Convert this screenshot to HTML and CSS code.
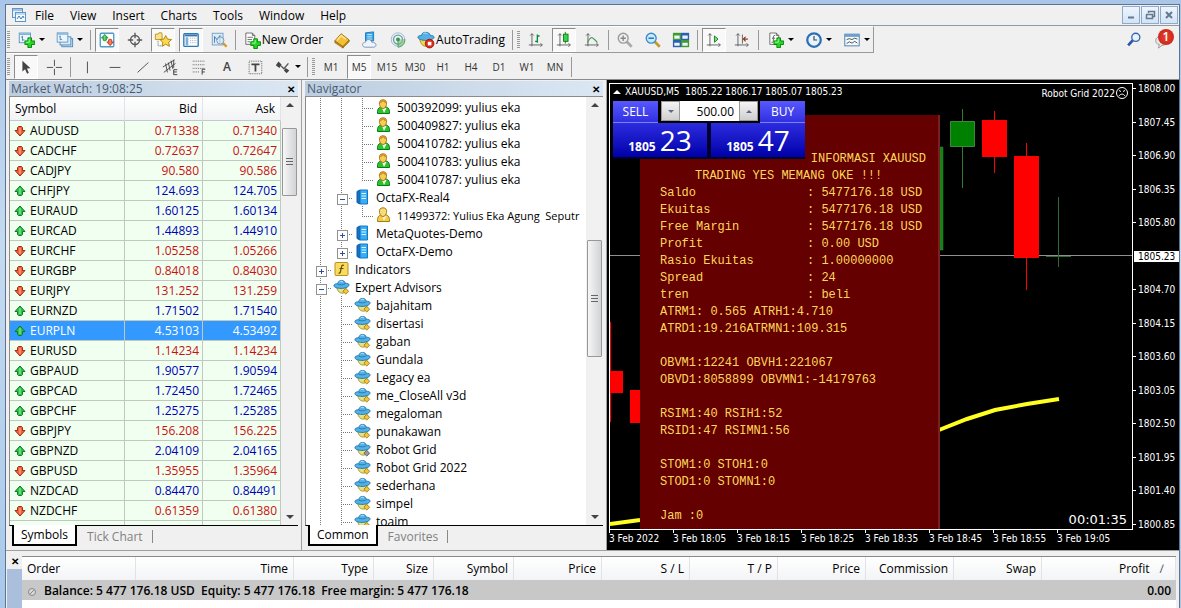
FILE: index.html
```html
<!DOCTYPE html>
<html lang="en">
<head>
    <meta charset="UTF-8">
    <meta name="viewport" content="width=device-width, initial-scale=1.0">
    <title>XAUUSD,M5</title>
    <link rel="stylesheet" href="styles.css">
</head>
<body>
    <!-- Icon set -->
    <svg class="defs" aria-hidden="true">
        <symbol id="up" viewBox="0 0 12 12"><path d="M6 1 L11 6.500 H8.500 V9.500 L7.500 10.500 H4.500 L3.500 9.500 V6.500 H1 Z" fill="#2fc24a" stroke="#0c7a24"/><path d="M6 3v6" stroke="#9bf0a8"/></symbol>
        <symbol id="down" viewBox="0 0 12 12"><path d="M6 11 L11 5.500 H8.500 V2.500 L7.500 1.500 H4.500 L3.500 2.500 V5.500 H1 Z" fill="#f0603a" stroke="#a02a10"/><path d="M6 3v6" stroke="#ffb39a"/></symbol>
        <symbol id="plus" viewBox="0 0 12 12"><path d="M4 .5h4v3.500h3.500v4H8v3.500H4V8H.5V4H4z" fill="#22d822" stroke="#067a06"/><path d="M5.500 2v3.500H2" fill="none" stroke="#a4ffa4"/></symbol>
        <symbol id="user" viewBox="0 0 16 16"><path d="M2 14.500c-.5-5 2-7 6-7s6.500 2 6 7z" fill="#2fc22f" stroke="#0a7a14"/><path d="M6.500 9l2 5 2.500-5z" fill="#eaffea"/><path d="M7.500 .8c-3 0-4 2-3.500 4.700.5 2.500 2 4 3.500 4s3-1.500 3.500-4C11.500 2.800 10.500.8 7.500.8z" fill="#f4cf52" stroke="#b8741a"/><path d="M5 4c1-3 4-3 5 0" fill="none" stroke="#d08a2c" stroke-width="1.500"/></symbol>
        <symbol id="usery" viewBox="0 0 16 16"><path d="M2 14.500c-.5-5 2-7 6-7s6.500 2 6 7z" fill="#f1cd4a" stroke="#a87a10"/><path d="M6.500 9l2 5 2.500-5z" fill="#fff4c8"/><path d="M7.500 .8c-3 0-4 2-3.500 4.700.5 2.500 2 4 3.500 4s3-1.500 3.500-4C11.500 2.800 10.500.8 7.500.8z" fill="#f7dd7a" stroke="#a87a10"/></symbol>
        <symbol id="server" viewBox="0 0 16 16"><path d="M2.500 2.500l3-1.500v14l-3-1.500z" fill="#1b6fc0" stroke="#0d5aa8"/><path d="M5.500 1h7.500v14H5.500z" fill="#35aef2" stroke="#1277c8"/><path d="M7 4.500h4.500M7 7h4.500M7 9.500h4.500" stroke="#e2f6ff"/></symbol>
        <symbol id="func" viewBox="0 0 16 16"><rect x="1.500" y="1.500" width="13" height="13" rx="1" fill="#f6dc62" stroke="#b8901c"/><path d="M10.500 4.500c-1.500-1-2.200 0-2.500 1.500l-1 4.500c-.3 1.500-1 2-2 1.500M6 7.500h4" fill="none" stroke="#6d4a00" stroke-width="1.200"/></symbol>
        <symbol id="ufo" viewBox="0 0 18 16"><path d="M4 8c.5 4.500 3 6.500 6 6.500s3.500-3.500 4-6.500z" fill="#e9e27a" stroke="#9d8f2a"/><path d="M1 6.500c0-1.500 2-2 4-2C5.500 2 7 1 9 1s3.500 1 4 3c2 0 4 .5 4 1.800 0 2-4 3.700-8.500 3.700S1 8.300 1 6.500z" fill="#55b0e4" stroke="#1d78b4"/><path d="M5 5c2 1 6 1 8-.5" fill="none" stroke="#1d78b4"/><path d="M7 2.500c1-.7 2.500-.7 3.500 0" stroke="#c9ecff" fill="none"/></symbol>
        <symbol id="ea" viewBox="0 0 18 16"><use href="#ufo" width="18" height="16"/><path d="M13.500 9.500l3 3-3 3-3-3z" fill="#f3c83c" stroke="#a87a10"/></symbol>
        <symbol id="eagray" viewBox="0 0 18 16"><use href="#ufo" width="18" height="16"/><path d="M13.500 9.500l3 3-3 3-3-3z" fill="#9a9a9a" stroke="#5c5c5c"/></symbol>
        <symbol id="axes" viewBox="0 0 20 20"><path d="M5.500 3v14M2 15.500h15M3.500 5l2-2 2 2M15 13.500l2 2-2 2" fill="none" stroke="#5a5a5a"/></symbol>
        <symbol id="chartwin" viewBox="0 0 20 20"><rect x="1.500" y="2.500" width="14" height="12" fill="#eaf5fd" stroke="#4a88b8"/><path d="M2 4h13" stroke="#7db4dc" stroke-width="2"/><path d="M5.500 6v6M4 7.500h1.500M5.500 11H8" stroke="#3d76a6" fill="none"/></symbol>
        <symbol id="page" viewBox="0 0 20 20"><path d="M3.500 2.500h8l3 3v11h-11z" fill="#fff" stroke="#555"/><path d="M11.500 2.500v3h3" fill="none" stroke="#555"/></symbol>
    </svg>

    <div class="window">
        <nav class="menubar">
            <svg class="app-icon" viewBox="0 0 16 16"><rect x="1.500" y="1.500" width="10" height="9" fill="#e6f2fb" stroke="#5f95c4"/><path d="M2 3h9" stroke="#5f95c4"/><rect x="4.500" y="5.500" width="10" height="9" fill="#f6fbff" stroke="#5f95c4"/><path d="M5 7h9" stroke="#8fbbe0"/><path d="M6 12l2-3 2 3 2-3 1 2" fill="none" stroke="#3f7fb8"/></svg>
            <a href="#">File</a>
            <a href="#">View</a>
            <a href="#">Insert</a>
            <a href="#">Charts</a>
            <a href="#">Tools</a>
            <a href="#">Window</a>
            <a href="#">Help</a>
            <div class="window-buttons">
                <button aria-label="Minimize"><svg viewBox="0 0 14 14"><path d="M4 9.500h6" stroke="#62798f" stroke-width="2"/></svg></button>
                <button aria-label="Restore"><svg viewBox="0 0 14 14"><path d="M5.500 5V3.500h6v5H10M5 3.500h6.500M3 6.500h6.500v4H3.500v-4" fill="none" stroke="#62798f" stroke-width="1.500"/></svg></button>
                <button aria-label="Close"><svg viewBox="0 0 14 14"><path d="M4 4l6 6M10 4l-6 6" stroke="#62798f" stroke-width="2"/></svg></button>
            </div>
        </nav>

        <div class="toolbar main-toolbar">
            <div class="tools">
                <span class="grip"></span>
                <button class="tool drop" aria-label="New chart"><svg viewBox="0 0 20 20"><use href="#chartwin" width="18" height="18"/><use href="#plus" x="7" y="7" width="12" height="12"/></svg></button>
                <button class="tool drop" aria-label="Profiles"><svg viewBox="0 0 20 20"><rect x="6.500" y="8.500" width="12" height="9" fill="#cfe5f6" stroke="#4a88b8"/><rect x="4.500" y="6.500" width="12" height="9" fill="#dcedf9" stroke="#4a88b8"/><use href="#chartwin" width="17" height="17"/></svg></button>
                <span class="sep"></span>
                <button class="tool pressed" aria-label="Market Watch"><svg viewBox="0 0 20 20"><rect x="2.500" y="2.500" width="15" height="15" rx="1" fill="#fff" stroke="#4e9ac8" stroke-width="1.500"/><use href="#up" x="3" y="3" width="9" height="9"/><use href="#down" x="9" y="8" width="9" height="9"/></svg></button>
                <button class="tool" aria-label="Data Window"><svg viewBox="0 0 20 20"><circle cx="10" cy="10" r="5" fill="none" stroke="#5a5a5a" stroke-width="1.500"/><path d="M10 2v6M10 12v6M2 10h6M12 10h6" stroke="#5a5a5a" stroke-width="1.500"/></svg></button>
                <button class="tool pressed" aria-label="Navigator"><svg viewBox="0 0 20 20"><path d="M1.500 3.500h3l1-1.500h3l.5 1.500v6H1.500z" fill="#f8e48a" stroke="#b8901c"/><path d="M4.500 11v5.500H9" fill="none" stroke="#555" stroke-dasharray="1 1"/><path d="M13 5l2 4 4.500.5-3.300 3 1 4.500-4.200-2.300L9 17l.8-4.500-3.300-3L11 9z" fill="#fbd94c" stroke="#b07c08"/></svg></button>
                <button class="tool pressed" aria-label="Terminal"><svg viewBox="0 0 20 20"><rect x="2" y="3" width="16" height="14" rx="1" fill="#fff" stroke="#2f77b4" stroke-width="1.500"/><path d="M3 5h14" stroke="#2f77b4" stroke-width="2"/><path d="M4 7h3v9H4z" fill="#79aedb"/><path d="M9 8h7M9 10.500h7M9 13h7" stroke="#aaa" stroke-dasharray="1 1"/></svg></button>
                <button class="tool" aria-label="Strategy Tester"><svg viewBox="0 0 20 20"><rect x="2.500" y="2.500" width="12" height="13" fill="#dcebf8" stroke="#6f9fc8"/><path d="M5 13V6l3 4 3-5v8" fill="none" stroke="#3f78ac"/><circle cx="11.500" cy="10.500" r="4" fill="#d8efff" fill-opacity=".6" stroke="#7894ac"/><path d="M14.500 13.500l4 4" stroke="#d29a2a" stroke-width="2.500"/></svg></button>
                <span class="sep"></span>
                <button class="tool wide"><svg viewBox="0 0 20 20"><use href="#page" width="18" height="18"/><path d="M5 7h6M5 9.500h5M5 12h3" stroke="#666"/><use href="#plus" x="8" y="8" width="12" height="12"/></svg>New Order</button>
                <button class="tool" aria-label="MetaEditor"><svg viewBox="0 0 20 20"><path d="M2 11l7-8 9 7-7 8z" fill="#f1bf38" stroke="#a06f08"/><path d="M2 11v2l9 6v-2zM11 19l7-7v-2l-7 7z" fill="#c48a14" stroke="#8c5f06" stroke-width=".6"/><path d="M4.500 10.500L9 5l5 4" fill="none" stroke="#ffe79a" stroke-width="1.500"/></svg></button>
                <button class="tool" aria-label="Virtual hosting"><svg viewBox="0 0 20 20"><path d="M5 2l9-1v10H5z" fill="#3aa7ea" stroke="#1a76bc"/><path d="M7 4h5M7 6.500h5M7 9h5" stroke="#d9f2ff"/><path d="M4.500 18c-4-.5-3.500-5.500.5-5.500 1-4 6-4 7 0 5-.5 6.500 5 2 5.500z" fill="#eef4fb" stroke="#7691b4"/></svg></button>
                <button class="tool" aria-label="Signals"><svg viewBox="0 0 20 20"><circle cx="10" cy="9.500" r="7.500" fill="none" stroke="#9bb4c8"/><circle cx="10" cy="9.500" r="5" fill="none" stroke="#5f9db4" stroke-width="1.500"/><path d="M10 9.500V18c5-.5 8-4 7.500-9" fill="#7cc47c" fill-opacity=".6" stroke="#4d9c58"/><circle cx="10" cy="9.500" r="2.200" fill="#3a9a4a"/></svg></button>
                <button class="tool wide auto"><svg viewBox="0 0 20 20"><path d="M3 9c1 6 4 8 7 8s5-4 6-8z" fill="#f4d648" stroke="#a88a14"/><path d="M1 7c0-1.500 2-2 4-2 .5-3 2.500-3.500 5-3.500S14.500 3 15 5c2 0 4 .5 4 2 0 2-4.500 3.500-9 3.500S1 9 1 7z" fill="#55b0e4" stroke="#1d78b4"/><path d="M7 3c1-1 3-1 4.500 0" fill="none" stroke="#c9ecff"/><circle cx="14" cy="14" r="4.800" fill="#e02a1a" stroke="#9c1408"/><rect x="12" y="12" width="4" height="4" fill="#fff"/></svg>AutoTrading</button>
                <span class="sep"></span>
                <span class="grip"></span>
                <button class="tool" aria-label="Bar chart"><svg viewBox="0 0 20 20"><use href="#axes" width="20" height="20"/><path d="M11.500 4v9M9 11.500h2.500M11.500 5.500H14" stroke="#0a8a3a" stroke-width="1.500"/></svg></button>
                <button class="tool pressed" aria-label="Candlesticks"><svg viewBox="0 0 20 20"><use href="#axes" width="20" height="20"/><path d="M11.500 1v13" stroke="#0a7a1a"/><rect x="9.500" y="3.500" width="5" height="8" fill="#35d64a" stroke="#0a7a1a"/></svg></button>
                <button class="tool" aria-label="Line chart"><svg viewBox="0 0 20 20"><use href="#axes" width="20" height="20"/><path d="M5 13c3-7 5-6 6-5s3 2 5 5" fill="none" stroke="#4a9a5a" stroke-width="1.300"/></svg></button>
                <span class="sep"></span>
                <button class="tool" aria-label="Zoom in"><svg viewBox="0 0 20 20"><path d="M12 12l5.500 5.500" stroke="#aaa" stroke-width="3"/><circle cx="8" cy="8" r="5.500" fill="#eee" stroke="#9a9a9a" stroke-width="1.500"/><path d="M5 8h6M8 5v6" stroke="#888" stroke-width="1.500"/></svg></button>
                <button class="tool" aria-label="Zoom out"><svg viewBox="0 0 20 20"><path d="M12 12l5.500 5.500" stroke="#c79a24" stroke-width="3"/><circle cx="8" cy="8" r="5.500" fill="#c4ecff" stroke="#3b8ac4" stroke-width="1.500"/><path d="M5 8h6" stroke="#1d62a4" stroke-width="1.500"/></svg></button>
                <button class="tool" aria-label="Tile windows"><svg viewBox="0 0 20 20"><path d="M1 2h9v8H1z" fill="#3f9a30"/><path d="M10 2h9v8h-9z" fill="#2d5fae"/><path d="M1 10h9v8H1z" fill="#2d5fae"/><path d="M10 10h9v8h-9z" fill="#3f9a30"/><path d="M2.500 5h6v3.500h-6zM11.500 5h6v3.500h-6zM2.500 13h6v3.500h-6zM11.500 13h6v3.500h-6z" fill="#e8f4ff"/></svg></button>
                <span class="sep"></span>
                <button class="tool pressed" aria-label="Auto scroll"><svg viewBox="0 0 20 20"><use href="#axes" width="20" height="20"/><path d="M10.500 5.500v7l4-3.500z" fill="#7be07b" stroke="#0a7a1a"/></svg></button>
                <button class="tool" aria-label="Chart shift"><svg viewBox="0 0 20 20"><use href="#axes" width="20" height="20"/><path d="M10.500 4v10" stroke="#5a5a5a"/><path d="M16.500 9H12M14 6.500L11.500 9l2.500 2.500" fill="none" stroke="#8a3a1a" stroke-width="1.300"/></svg></button>
                <span class="sep"></span>
                <button class="tool drop" aria-label="Indicators"><svg viewBox="0 0 20 20"><use href="#page" width="18" height="18"/><path d="M9 5c-2-.5-2 1-2 3v3c0 1.500-1 2-2 1.500M5.500 8H9" fill="none" stroke="#555"/><use href="#plus" x="7" y="7" width="12" height="12"/></svg></button>
                <button class="tool drop" aria-label="Periods"><svg viewBox="0 0 20 20"><circle cx="10" cy="10" r="7.500" fill="#e8f4fd" stroke="#2d6fb4" stroke-width="2.500"/><path d="M10 5.500V10h3.500" fill="none" stroke="#444" stroke-width="1.300"/></svg></button>
                <button class="tool drop" aria-label="Templates"><svg viewBox="0 0 20 20"><rect x="2" y="3.500" width="16" height="13" fill="#f6fbff" stroke="#3f78ac"/><path d="M2 5h16" stroke="#6b9fce" stroke-width="3"/><path d="M4 9.500l3-1 3 1 3-1.500 3 1M4 14l3-2 3 1.500 3-2 3 2" fill="none" stroke="#444"/></svg></button>
            </div>
            <div class="side-tools">
                <button class="tool" aria-label="Search"><svg viewBox="0 0 20 20"><circle cx="12" cy="7" r="4.500" fill="#e8f1fc" stroke="#3567b4" stroke-width="1.500"/><path d="M8.500 10.500L3.500 16" stroke="#2c55a8" stroke-width="3"/></svg></button>
                <button class="tool chat" aria-label="Messages"><svg viewBox="0 0 20 20"><path d="M9 6c4.500 0 7 2 7 5s-3 5-6 5l-4 3 1-4c-3-.5-4-2-4-4.500S5 6 9 6z" fill="#e6e6e6" stroke="#999"/></svg><span class="badge">1</span></button>
            </div>
        </div>

        <div class="toolbar draw-toolbar">
            <div class="tools">
                <span class="grip"></span>
                <button class="tool pressed" aria-label="Cursor"><svg viewBox="0 0 20 20"><path d="M6 3l9 8.500-4 .3 2.200 4.700-2 1-2.200-5L6 15z" fill="#444"/></svg></button>
                <button class="tool" aria-label="Crosshair"><svg viewBox="0 0 20 20"><path d="M10.500 2v7M10.500 12v7M2 10.500h7M12 10.500h7" stroke="#444"/></svg></button>
                <span class="sep"></span>
                <button class="tool" aria-label="Vertical line"><svg viewBox="0 0 20 20"><path d="M10.500 4v13" stroke="#444"/></svg></button>
                <button class="tool" aria-label="Horizontal line"><svg viewBox="0 0 20 20"><path d="M4 10.500h12" stroke="#444"/></svg></button>
                <button class="tool" aria-label="Trendline"><svg viewBox="0 0 20 20"><path d="M4 16L16 5" stroke="#444"/></svg></button>
                <button class="tool" aria-label="Equidistant channel"><svg viewBox="0 0 20 20"><path d="M1 10L14 2M2 16L15 6M4 6l2 10M7 5l2 9M10 3l2 9M13 2l0 9" stroke="#444"/><path d="M17 13h-4v5.500h4M13 15.500h3.500" fill="none" stroke="#333"/></svg></button>
                <button class="tool" aria-label="Fibonacci"><svg viewBox="0 0 20 20"><path d="M3 3.500h14M3 7.500h14M3 11.500h14M3 15.500h8" stroke="#555" stroke-dasharray="1 1"/><path d="M17 12.500h-3.500v6M13.500 15.500h3" fill="none" stroke="#333"/></svg></button>
                <button class="tool letter">A</button>
                <button class="tool" aria-label="Text label"><svg viewBox="0 0 20 20"><rect x="3.500" y="3.500" width="14" height="14" fill="none" stroke="#555" stroke-dasharray="1 1"/><path d="M6 7h9M10.500 7v8" stroke="#444" stroke-width="2"/></svg></button>
                <button class="tool drop" aria-label="Arrows"><svg viewBox="0 0 20 20"><path d="M5 4l3.500 3.500L6 11 2 8z" fill="#444"/><path d="M8 9l3 3 5-6" fill="none" stroke="#555" stroke-width="1.500"/><path d="M13 11l4 3-3 3-3-3z" fill="#444"/></svg></button>
                <span class="sep"></span>
                <span class="grip"></span>
                <button class="tool period">M1</button>
                <button class="tool period pressed">M5</button>
                <button class="tool period">M15</button>
                <button class="tool period">M30</button>
                <button class="tool period">H1</button>
                <button class="tool period">H4</button>
                <button class="tool period">D1</button>
                <button class="tool period">W1</button>
                <button class="tool period">MN</button>
                <span class="sep"></span>
            </div>
        </div>

        <main class="workspace">
            <section class="pane">
                <div class="pane-title"><span>Market Watch: 19:08:25</span><button class="close" aria-label="Close Market Watch">✕</button></div>
                <div class="pane-body">
                    <div class="scroll-area">
                        <table class="quotes">
                            <thead><tr><th>Symbol</th><th class="price">Bid</th><th class="price">Ask</th></tr></thead>
                            <tbody>
                                <tr class="fall"><td><svg><use href="#down"/></svg>AUDUSD</td><td>0.71338</td><td>0.71340</td></tr>
                                <tr class="fall"><td><svg><use href="#down"/></svg>CADCHF</td><td>0.72637</td><td>0.72647</td></tr>
                                <tr class="fall"><td><svg><use href="#down"/></svg>CADJPY</td><td>90.580</td><td>90.586</td></tr>
                                <tr><td><svg><use href="#up"/></svg>CHFJPY</td><td>124.693</td><td>124.705</td></tr>
                                <tr><td><svg><use href="#up"/></svg>EURAUD</td><td>1.60125</td><td>1.60134</td></tr>
                                <tr><td><svg><use href="#up"/></svg>EURCAD</td><td>1.44893</td><td>1.44910</td></tr>
                                <tr class="fall"><td><svg><use href="#down"/></svg>EURCHF</td><td>1.05258</td><td>1.05266</td></tr>
                                <tr class="fall"><td><svg><use href="#down"/></svg>EURGBP</td><td>0.84018</td><td>0.84030</td></tr>
                                <tr class="fall"><td><svg><use href="#down"/></svg>EURJPY</td><td>131.252</td><td>131.259</td></tr>
                                <tr><td><svg><use href="#up"/></svg>EURNZD</td><td>1.71502</td><td>1.71540</td></tr>
                                <tr class="selected"><td><svg><use href="#up"/></svg>EURPLN</td><td>4.53103</td><td>4.53492</td></tr>
                                <tr class="fall"><td><svg><use href="#down"/></svg>EURUSD</td><td>1.14234</td><td>1.14234</td></tr>
                                <tr><td><svg><use href="#up"/></svg>GBPAUD</td><td>1.90577</td><td>1.90594</td></tr>
                                <tr><td><svg><use href="#up"/></svg>GBPCAD</td><td>1.72450</td><td>1.72465</td></tr>
                                <tr><td><svg><use href="#up"/></svg>GBPCHF</td><td>1.25275</td><td>1.25285</td></tr>
                                <tr class="fall"><td><svg><use href="#down"/></svg>GBPJPY</td><td>156.208</td><td>156.225</td></tr>
                                <tr><td><svg><use href="#up"/></svg>GBPNZD</td><td>2.04109</td><td>2.04165</td></tr>
                                <tr class="fall"><td><svg><use href="#down"/></svg>GBPUSD</td><td>1.35955</td><td>1.35964</td></tr>
                                <tr><td><svg><use href="#up"/></svg>NZDCAD</td><td>0.84470</td><td>0.84491</td></tr>
                                <tr class="fall"><td><svg><use href="#down"/></svg>NZDCHF</td><td>0.61359</td><td>0.61380</td></tr>
                                <tr><td></td><td></td><td></td></tr>
                            </tbody>
                        </table>
                    </div>
                    <div class="scrollbar"><i class="arrow-up"></i><div class="track"><i class="thumb quotes-thumb"></i></div><i class="arrow-down"></i></div>
                </div>
                <div class="tabs"><button class="active">Symbols</button><button>Tick Chart</button></div>
            </section>

            <section class="pane navigator">
                <div class="pane-title"><span>Navigator</span><button class="close" aria-label="Close Navigator">✕</button></div>
                <div class="pane-body">
                    <ul class="scroll-area tree">
                        <li><i class="line"></i><i class="line"></i><i class="tee"></i><svg><use href="#user"/></svg>500392099: yulius eka</li>
                        <li><i class="line"></i><i class="line"></i><i class="tee"></i><svg><use href="#user"/></svg>500409827: yulius eka</li>
                        <li><i class="line"></i><i class="line"></i><i class="tee"></i><svg><use href="#user"/></svg>500410782: yulius eka</li>
                        <li><i class="line"></i><i class="line"></i><i class="tee"></i><svg><use href="#user"/></svg>500410783: yulius eka</li>
                        <li><i class="line"></i><i class="line"></i><i class="tee last"></i><svg><use href="#user"/></svg>500410787: yulius eka</li>
                        <li><i class="line"></i><i class="tee box minus"></i><svg><use href="#server"/></svg>OctaFX-Real4</li>
                        <li class="long"><i class="line"></i><i class="line"></i><i class="tee last"></i><svg><use href="#usery"/></svg>11499372: Yulius Eka Agung&nbsp; Seputr</li>
                        <li><i class="line"></i><i class="tee box"></i><svg><use href="#server"/></svg>MetaQuotes-Demo</li>
                        <li><i class="line"></i><i class="tee last box"></i><svg><use href="#server"/></svg>OctaFX-Demo</li>
                        <li><i class="tee box"></i><svg><use href="#func"/></svg>Indicators</li>
                        <li><i class="tee box minus"></i><svg><use href="#ea"/></svg>Expert Advisors</li>
                        <li><i class="line"></i><i class="tee"></i><svg><use href="#ea"/></svg>bajahitam</li>
                        <li><i class="line"></i><i class="tee"></i><svg><use href="#ea"/></svg>disertasi</li>
                        <li><i class="line"></i><i class="tee"></i><svg><use href="#ea"/></svg>gaban</li>
                        <li><i class="line"></i><i class="tee"></i><svg><use href="#ea"/></svg>Gundala</li>
                        <li><i class="line"></i><i class="tee"></i><svg><use href="#ea"/></svg>Legacy ea</li>
                        <li><i class="line"></i><i class="tee"></i><svg><use href="#ea"/></svg>me_CloseAll v3d</li>
                        <li><i class="line"></i><i class="tee"></i><svg><use href="#ea"/></svg>megaloman</li>
                        <li><i class="line"></i><i class="tee"></i><svg><use href="#ea"/></svg>punakawan</li>
                        <li><i class="line"></i><i class="tee"></i><svg><use href="#eagray"/></svg>Robot Grid</li>
                        <li><i class="line"></i><i class="tee"></i><svg><use href="#ea"/></svg>Robot Grid 2022</li>
                        <li><i class="line"></i><i class="tee"></i><svg><use href="#ea"/></svg>sederhana</li>
                        <li><i class="line"></i><i class="tee"></i><svg><use href="#ea"/></svg>simpel</li>
                        <li><i class="line"></i><i class="tee"></i><svg><use href="#ea"/></svg>toaim</li>
                    </ul>
                    <div class="scrollbar"><i class="arrow-up"></i><div class="track"><i class="thumb tree-thumb"></i></div><i class="arrow-down"></i></div>
                </div>
                <div class="tabs"><button class="active">Common</button><button>Favorites</button></div>
            </section>

            <section class="chart">
                <div class="plot">
                    <svg class="candles">
                        <path d="M0 171.500H2000" stroke="#8c9090"/>
                        <path d="M.5 238v100" stroke="#f00"/>
                        <path d="M0 287h13v22H0zM20 306h12v33H20z" fill="#f00"/>
                        <path d="M330 63h3v103h-3z" fill="#128012" stroke="#3a8a3a" stroke-width=".5"/>
                        <path d="M352.500 25v79" stroke="#2e7d32"/>
                        <path d="M340.500 37.500h24v25h-24z" fill="#008000" stroke="#3a8a3a"/>
                        <path d="M384.500 27v62M416.500 59v147" stroke="#f00"/>
                        <path d="M372 36h25v37h-25zM404 72h25v102h-25z" fill="#f00"/>
                        <path d="M448.500 113v70M436 172.500h25" stroke="#2e6b30"/>
                        <path d="M0 440L30 436M329 346L357 335L385 326L417 320L449 315" fill="none" stroke="#ffff20" stroke-width="4"/>
                    </svg>
                    <div class="info">
                        <p class="right">INFORMASI XAUUSD</p>
                        <p class="center">TRADING YES MEMANG OKE !!!</p>
                        <dl>
                            <dt>Saldo</dt><dd>: 5477176.18 USD</dd>
                            <dt>Ekuitas</dt><dd>: 5477176.18 USD</dd>
                            <dt>Free Margin</dt><dd>: 5477176.18 USD</dd>
                            <dt>Profit</dt><dd>: 0.00 USD</dd>
                            <dt>Rasio Ekuitas</dt><dd>: 1.00000000</dd>
                            <dt>Spread</dt><dd>: 24</dd>
                            <dt>tren</dt><dd>: beli</dd>
                        </dl>
                        <p>ATRM1: 0.565 ATRH1:4.710<br>ATRD1:19.216ATRMN1:109.315</p>
                        <p class="group">OBVM1:12241 OBVH1:221067<br>OBVD1:8058899 OBVMN1:-14179763</p>
                        <p class="group">RSIM1:40 RSIH1:52<br>RSID1:47 RSIMN1:56</p>
                        <p class="group">STOM1:0 STOH1:0<br>STOD1:0 STOMN1:0</p>
                        <p class="group">Jam :0</p>
                    </div>
                    <div class="chart-title"><i></i>XAUUSD,M5&nbsp; 1805.22 1806.17 1805.07 1805.23</div>
                    <div class="expert">Robot Grid 2022<svg viewBox="0 0 14 14"><circle cx="7" cy="7" r="5.500" fill="none" stroke="#fff"/><path d="M4 4.500l2 1M10 4.500l-2 1M4 10c1.500-2.500 4.500-2.500 6 0" fill="none" stroke="#fff"/></svg></div>
                    <div class="trade">
                        <button><span class="side">SELL</span><span class="quote"><b>1805</b><big>23</big></span></button>
                        <button class="buy"><span class="side">BUY</span><span class="quote"><b>1805</b><big>47</big></span></button>
                        <div class="lots">
                            <button class="less" aria-label="Decrease volume"></button>
                            <input type="text" value="500.00" aria-label="Volume">
                            <button class="more" aria-label="Increase volume"></button>
                        </div>
                    </div>
                    <div class="timer">00:01:35</div>
                </div>
                <div class="price-axis">
                    <span>1808.00</span><span>1807.45</span><span>1806.90</span><span>1806.35</span><span>1805.80</span><span class="current">1805.23</span><span>1804.70</span><span>1804.15</span><span>1803.60</span><span>1803.05</span><span>1802.50</span><span>1801.95</span><span>1801.40</span><span>1800.85</span>
                </div>
                <div class="time-axis">
                    <span>3 Feb 2022</span><span>3 Feb 18:05</span><span>3 Feb 18:15</span><span>3 Feb 18:25</span><span>3 Feb 18:35</span><span>3 Feb 18:45</span><span>3 Feb 18:55</span><span>3 Feb 19:05</span>
                </div>
            </section>
        </main>

        <section class="terminal">
            <div class="terminal-side"><button class="close" aria-label="Close Terminal">✕</button></div>
            <table class="orders">
                <colgroup><col class="c-order"><col class="c-time"><col class="c-type"><col class="c-size"><col class="c-type"><col class="c-num"><col class="c-num"><col class="c-num"><col class="c-num"><col class="c-num"><col class="c-num"><col></colgroup>
                <thead>
                    <tr><th class="first">Order</th><th>Time</th><th>Type</th><th>Size</th><th>Symbol</th><th>Price</th><th>S / L</th><th>T / P</th><th>Price</th><th>Commission</th><th>Swap</th><th>Profit<span class="sort">∕</span></th></tr>
                </thead>
                <tbody>
                    <tr><td colspan="11"><svg viewBox="0 0 10 10"><circle cx="5" cy="5" r="3.500" fill="#d8d8d8" stroke="#888"/><path d="M3 7l4-4" stroke="#888"/></svg>Balance: 5 477 176.18 USD&nbsp; Equity: 5 477 176.18&nbsp; Free margin: 5 477 176.18</td><td class="total">0.00</td></tr>
                </tbody>
            </table>
        </section>
    </div>
</body>
</html>
```
FILE: styles.css
```css
* {
    box-sizing: border-box;
}

body {
    margin: 0;
    height: 100vh;
    padding: 4px 1px 0 5px;
    overflow: hidden;
    font-family: "Open Sans", "Noto Sans", sans-serif;
    font-size: 12px;
    color: #000;
    background: linear-gradient(#a9c6e8, #c4daf0 40%, #a8c8ea);
}

button {
    margin: 0;
    padding: 0;
    border: none;
    background: none;
    font: inherit;
    color: inherit;
}

.defs {
    position: absolute;
    width: 0;
    height: 0;
}

.window {
    display: flex;
    flex-direction: column;
    height: 100%;
    background: #f0f0f0;
    border: 1px solid #5d7390;
    border-bottom: none;
}

/* Menu */
.menubar {
    display: flex;
    align-items: center;
    height: 21px;
    padding-left: 5px;
    border-bottom: 1px solid #8f9aa5;
}

.menubar a {
    padding: 0 8px;
    color: #000;
    text-decoration: none;
}

.app-icon {
    width: 16px;
    height: 16px;
}

.window-buttons {
    display: flex;
    gap: 1px;
    margin-left: auto;
    padding-right: 1px;
}

.window-buttons button {
    display: flex;
    align-items: center;
    justify-content: center;
    width: 18px;
    height: 18px;
    background: linear-gradient(#eef5fd, #d3e4f6);
    border: 1px solid #8eaac8;
}

.window-buttons svg {
    width: 14px;
    height: 14px;
}

/* Toolbars */
.toolbar {
    display: flex;
    justify-content: space-between;
    height: 27px;
}

.draw-toolbar {
    border-bottom: 1px solid #8a8a8a;
}

.tools {
    display: flex;
    align-items: center;
    gap: 4px;
    padding-left: 1px;
    border-top: 1px solid #fff;
}

.main-toolbar .tools {
    border-right: 1px solid #999;
    border-bottom: 1px solid #999;
}

.grip {
    width: 3px;
    height: 18px;
    background: repeating-linear-gradient(#9a9a9a 0 1px, #f0f0f0 1px 2px);
}

.sep {
    width: 1px;
    height: 20px;
    background: #999;
}

.tool {
    display: flex;
    align-items: center;
    justify-content: center;
    width: 24px;
    height: 24px;
    border: 1px solid transparent;
}

.tool svg {
    flex: none;
    width: 18px;
    height: 18px;
}

.drop {
    width: 34px;
    gap: 3px;
    padding-left: 1px;
}

.draw-toolbar .drop {
    width: 32px;
}

.drop::after {
    content: "";
    border: 3px solid transparent;
    border-top-color: #000;
    border-bottom: none;
}

.pressed {
    border-color: #8c8c8c #fff #fff #8c8c8c;
    background: #f9f9f9;
}

.wide {
    width: 86px;
    gap: 1px;
    white-space: nowrap;
}

.auto {
    width: 94px;
}

.letter {
    color: #444;
    font-weight: 600;
}

.period {
    font-size: 10px;
    color: #333;
}

.side-tools {
    display: flex;
    align-items: center;
    gap: 4px;
    padding-right: 5px;
}

.chat {
    position: relative;
}

.badge {
    position: absolute;
    top: 0;
    right: -1px;
    width: 16px;
    height: 16px;
    border-radius: 50%;
    background: radial-gradient(#e8402c, #c02014);
    color: #fff;
    font-weight: 600;
    line-height: 16px;
    text-align: center;
}

/* Panes */
.workspace {
    display: flex;
    flex: 1;
    min-height: 0;
    border-bottom: 1px solid #a0a0a0;
}

.pane {
    display: flex;
    flex-direction: column;
    width: 296px;
    padding: 1px 3px 0;
    border-right: 1px solid #a0a0a0;
}

.navigator {
    width: 305px;
}

.pane-title {
    display: flex;
    align-items: center;
    justify-content: space-between;
    height: 15px;
    padding: 0 3px 0 2px;
    background: linear-gradient(90deg, #bccde0, #dbe7f3);
    color: #4a5a72;
}

.close {
    color: #000;
    font-size: 10px;
    font-weight: bold;
    line-height: 14px;
}

.pane-body {
    display: flex;
    flex: 1;
    min-height: 0;
    background: #fff;
    border: 1px solid #8a8a8a;
    border-right: none;
    border-bottom: 1px solid #000;
}

.scroll-area {
    flex: 1;
    min-width: 0;
    overflow: hidden;
}

.quotes {
    width: 100%;
    border-collapse: separate;
    border-spacing: 0;
    table-layout: fixed;
}

.quotes th {
    height: 24px;
    padding: 0 5px;
    background: linear-gradient(#fff, #f2f3f5);
    border-right: 1px solid #e0e4ea;
    border-bottom: 1px solid #c4c8cc;
    font-weight: normal;
    text-align: left;
}

.quotes .price {
    width: 78px;
    text-align: right;
}

.quotes td {
    height: 20px;
    padding: 0 3px 0 4px;
    background: #f0fff0;
    border-right: 1px solid #c0c8c0;
    border-bottom: 1px solid #c0c8c0;
    color: #0000b8;
    line-height: 18px;
    text-align: right;
}

.quotes td:first-child {
    color: #000;
    text-align: left;
}

.quotes td svg {
    width: 12px;
    height: 12px;
    margin-right: 4px;
    vertical-align: -2px;
}

.quotes .fall td {
    color: #cc1010;
}

.quotes .fall td:first-child {
    color: #000;
}

.quotes tr.selected td,
.quotes tr.selected td:first-child {
    background: #3399ff;
    color: #fff;
}

.scrollbar {
    display: flex;
    flex-direction: column;
    align-items: center;
    width: 17px;
    padding: 6px 0;
    background: #f1f1f1;
}

.arrow-up,
.arrow-down {
    border: 4px solid transparent;
}

.arrow-up {
    border-top: none;
    border-bottom-color: #444;
}

.arrow-down {
    border-bottom: none;
    border-top-color: #444;
}

.track {
    flex: 1;
}

.thumb {
    display: flex;
    align-items: center;
    justify-content: center;
    width: 15px;
    background: linear-gradient(90deg, #f6f6f6, #d2d3d6);
    border: 1px solid #989898;
    border-radius: 1px;
}

.thumb::after {
    content: "";
    width: 7px;
    height: 8px;
    background: repeating-linear-gradient(#666 0 1px, transparent 1px 3px);
}

.quotes-thumb {
    height: 68px;
    margin-top: 21px;
}

.tree-thumb {
    height: 117px;
    margin-top: 133px;
}

.tabs {
    display: flex;
    height: 24px;
    padding-left: 3px;
    color: #808080;
}

.tabs button {
    height: 20px;
    padding: 0 10px;
}

.tabs button:last-child {
    background: linear-gradient(#888, #888) right center / 1px 13px no-repeat;
}

.tabs .active {
    margin-top: -1px;
    background: #fff;
    border: solid #000;
    border-width: 0 2px 2px;
    color: #000;
    height: 21px;
    padding: 0 7px;
}

/* Navigator tree */
.tree {
    margin: 0;
    padding: 1px 0 0 4px;
    list-style: none;
}

.tree li {
    display: flex;
    align-items: center;
    height: 18px;
    white-space: pre;
}

.tree .long {
    font-size: 11px;
}

.tree svg {
    flex: none;
    width: 17px;
    height: 16px;
    margin: 0 5px 0 2px;
}

.tree i {
    position: relative;
    flex: none;
    width: 21px;
    height: 18px;
    background: repeating-linear-gradient(#777 0 1px, transparent 1px 2px) 10px 0 / 1px 100% no-repeat;
}

.tree .tee {
    background:
        repeating-linear-gradient(#777 0 1px, transparent 1px 2px) 10px 0 / 1px 100% no-repeat,
        repeating-linear-gradient(90deg, #777 0 1px, transparent 1px 2px) 10px 10px / 11px 1px no-repeat;
}

.tree .last {
    background-size: 1px 10px, 11px 1px;
}

/* Plus and minus boxes over the guide lines */
.tree .box::before {
    content: "";
    position: absolute;
    left: 6px;
    top: 6px;
    width: 9px;
    height: 9px;
    border: 1px solid #919191;
    background:
        linear-gradient(#2f4fa0, #2f4fa0) center / 5px 1px no-repeat,
        linear-gradient(#2f4fa0, #2f4fa0) center / 1px 5px no-repeat,
        #fff;
}

.tree .minus::before {
    background: linear-gradient(#2f4fa0, #2f4fa0) center / 5px 1px no-repeat, #fff;
}

/* Chart */
.chart {
    display: grid;
    grid-template: 1fr 20px / 1fr 46px;
    flex: 1;
    min-width: 0;
    padding: 3px 0 0 2px;
    background: #000;
    color: #fff;
    font-family: "DejaVu Sans Condensed", "DejaVu Sans", sans-serif;
    font-size: 10px;
}

.plot {
    position: relative;
    border: 1px solid #fff;
}

.candles {
    display: block;
    width: 100%;
    height: 100%;
}

/* Expert readout laid over the candles */
.info {
    position: absolute;
    top: 31px;
    bottom: 0;
    left: 30px;
    width: 300px;
    padding: 36px 12px 0 20px;
    background: #640000;
    border-right: 2px solid #762020;
    color: #ffd75a;
    font-family: "Liberation Mono", monospace;
    font-size: 12px;
    line-height: 17px;
    white-space: nowrap;
}

.info p,
.info dl,
.info dd {
    margin: 0;
}

.info .group {
    margin-top: 17px;
}

.info .right {
    text-align: right;
}

.info .center {
    padding-left: 35px;
}

.info dl {
    display: grid;
    grid-template-columns: 147px 1fr;
}

.chart-title,
.expert,
.trade,
.timer {
    position: absolute;
}

.chart-title {
    top: 2px;
    left: 3px;
    display: flex;
    align-items: center;
    gap: 4px;
}

.chart-title i {
    border: 4px solid transparent;
    border-top: none;
    border-bottom-color: #fff;
}

.expert {
    top: 2px;
    right: 3px;
    display: flex;
    align-items: center;
}

.expert svg {
    width: 14px;
    height: 14px;
}

.timer {
    right: 5px;
    bottom: 2px;
    font-family: "DejaVu Sans", sans-serif;
    font-size: 13px;
}

.trade {
    top: 17px;
    left: 3px;
    display: grid;
    grid-template-columns: 94px 94px;
    gap: 4px;
    padding-bottom: 2px;
    background: #000030;
    font-family: "Open Sans", sans-serif;
}

.trade > button {
    display: flex;
    flex-direction: column;
    background: #000;
}

.trade > .buy {
    align-items: flex-end;
}

.side {
    width: 45px;
    height: 22px;
    background: linear-gradient(#5858ff, #3030e0);
    border-bottom: 1px solid #8080f0;
    font-size: 12px;
    line-height: 22px;
}

.quote {
    display: flex;
    align-items: baseline;
    justify-content: center;
    gap: 4px;
    width: 100%;
    height: 34px;
    background: linear-gradient(#2c2ce0, #0000a8);
    font-size: 12px;
    line-height: 34px;
}

.quote big {
    font-size: 28px;
}

.lots {
    position: absolute;
    top: 0;
    left: 48px;
    display: flex;
    width: 97px;
    height: 20px;
    background: #fff;
}

.lots button {
    display: flex;
    align-items: center;
    justify-content: center;
    width: 19px;
    background: linear-gradient(#f4f4f4, #cfcfcf);
    border: 1px solid #999;
}

.less::before,
.more::before {
    content: "";
    border: 3px solid transparent;
}

.less::before {
    border-bottom: none;
    border-top-color: #5a6a8a;
}

.more::before {
    border-top: none;
    border-bottom-color: #5a6a8a;
}

.lots input {
    flex: 1;
    min-width: 0;
    padding: 0 5px;
    border: none;
    font: 12px "Open Sans", sans-serif;
    text-align: right;
}

.price-axis {
    display: flex;
    flex-direction: column;
    justify-content: space-between;
    line-height: 11px;
}

.price-axis span {
    padding-left: 5px;
    background: linear-gradient(#fff, #fff) left center / 3px 1px no-repeat;
}

.price-axis .current {
    margin-left: 1px;
    padding-left: 4px;
    background: #fff;
    color: #000;
}

.time-axis {
    display: grid;
    grid-template-columns: repeat(8, 64px);
    line-height: 18px;
    white-space: nowrap;
}

.time-axis span {
    background: linear-gradient(#fff, #fff) 0 0 / 1px 3px no-repeat;
}

/* Terminal */
.terminal {
    display: flex;
    height: 57px;
    padding: 5px 3px 0 1px;
}

.terminal-side {
    display: flex;
    flex-direction: column;
    align-items: center;
    width: 15px;
    background: linear-gradient(#f0f0f0 13px, #a9bfdc 13px);
}

.terminal .close {
    line-height: 10px;
}

.orders {
    flex: 1;
    table-layout: fixed;
    width: 100%;
    border-spacing: 0;
    border-top: 1px solid #8a8a8a;
    background: #fff;
    align-self: flex-start;
    border-bottom: 12px solid #fff;
}

.orders th {
    height: 23px;
    padding: 0 5px;
    background: linear-gradient(#fff, #f3f4f6);
    border-right: 1px solid #e0e4ea;
    font-weight: normal;
    text-align: right;
}

.orders .first {
    text-align: left;
}

.c-order {
    width: 114px;
}

.c-time {
    width: 158px;
}

.c-type {
    width: 80px;
}

.c-size {
    width: 60px;
}

.c-num {
    width: 88px;
}

.sort {
    padding: 0 6px 0 10px;
    color: #555;
}

.orders td {
    height: 20px;
    padding: 0 5px;
    background: #c8c8c8;
    font-weight: 600;
}

.orders td svg {
    width: 10px;
    height: 10px;
    margin-right: 7px;
    vertical-align: -2px;
}

.orders .total {
    text-align: right;
}
```
